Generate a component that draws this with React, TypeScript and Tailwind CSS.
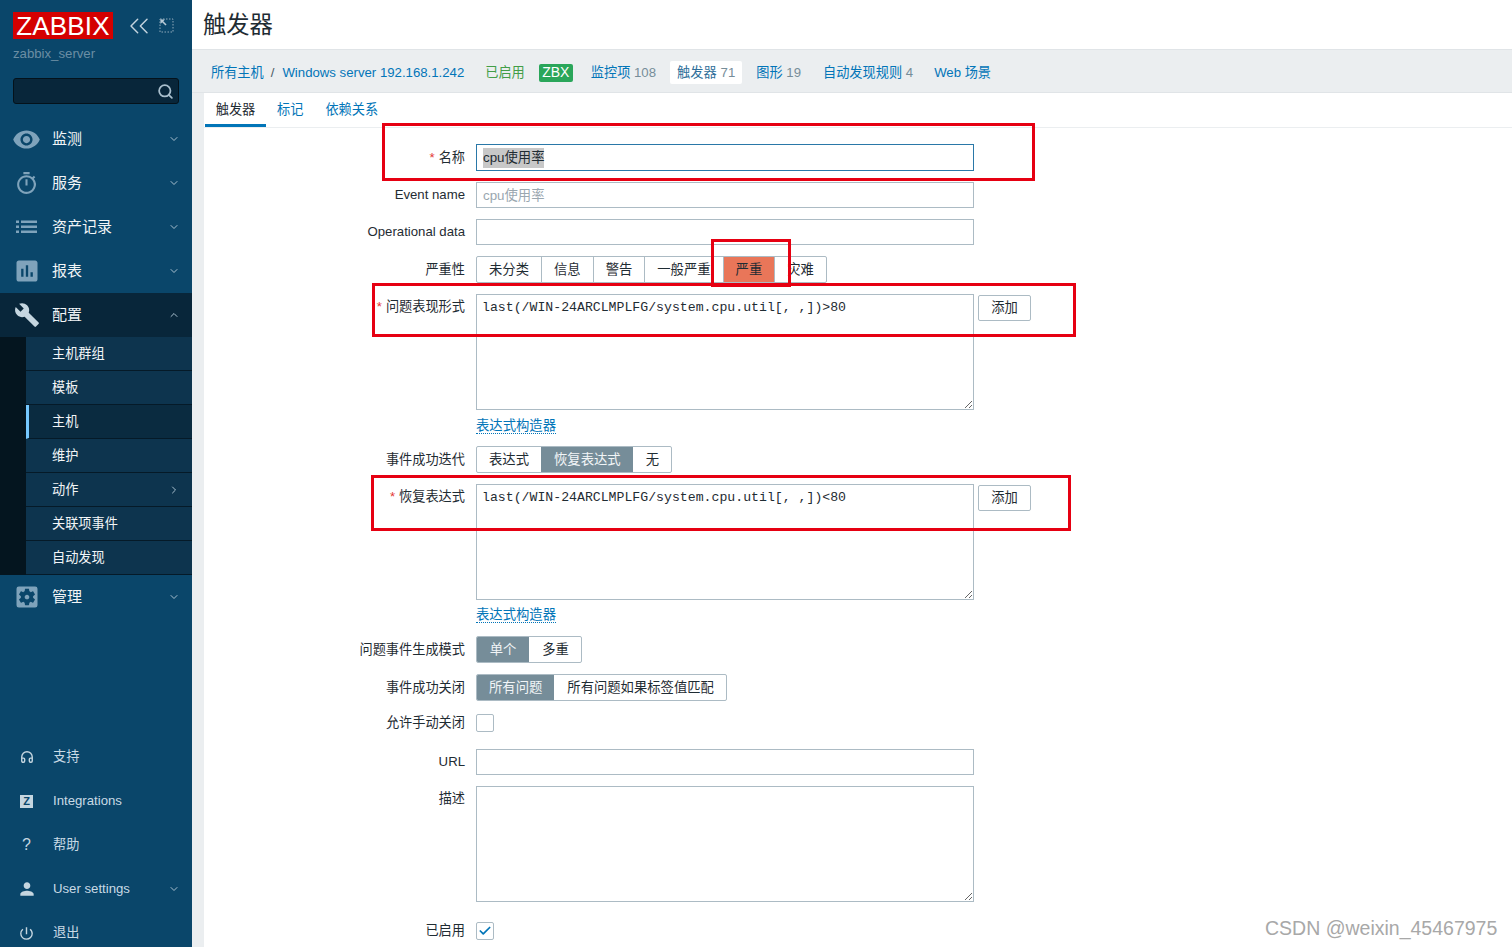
import React from "react";
import { ChevronDown, ChevronUp, ChevronRight, ChevronsLeft, Search, Check, Headphones } from "lucide-react";
import { MdVisibility, MdOutlineTimer, MdAssessment, MdBuild, MdSettingsApplications, MdPerson, MdPowerSettingsNew } from "react-icons/md";

function ListIcon() {
  return (
    <svg width="22" height="14" viewBox="0 0 22 14" fill="#7fa3bb">
      <rect x="0" y="0.5" width="3" height="2.5" />
      <rect x="0" y="5.5" width="3" height="2.5" />
      <rect x="0" y="10.5" width="3" height="2.5" />
      <rect x="5" y="0.5" width="16" height="2.5" />
      <rect x="5" y="5.5" width="16" height="2.5" />
      <rect x="5" y="10.5" width="16" height="2.5" />
    </svg>
  );
}

function KioskIcon() {
  return (
    <svg width="15" height="15" viewBox="0 0 15 15" fill="none" stroke="#8fa9ba">
      <rect x="1" y="1" width="13" height="13" strokeDasharray="1.5 1.5" />
      <path d="M2 2l5 5" strokeWidth="1.6" stroke="#b8cad6" />
      <path d="M1.5 6V1.5H6z" fill="#b8cad6" stroke="none" />
    </svg>
  );
}

function MainItem({ icon, label, open, active }: { icon: React.ReactNode; label: string; open?: boolean; active?: boolean }) {
  return (
    <div className={`flex h-[44px] items-center ${active ? "bg-[#08263a]" : ""}`}>
      <div className="flex w-[52px] justify-center pl-[1px]">{icon}</div>
      <span className="flex-1 text-[15px] text-[#f2f5f7]">{label}</span>
      <div className="flex w-[36px] justify-center pr-[1px] text-[#a9c0cf]">
        {open ? <ChevronUp size={12} strokeWidth={2} /> : <ChevronDown size={12} strokeWidth={2} />}
      </div>
    </div>
  );
}

function SubItem({ label, active, arrow }: { label: string; active?: boolean; arrow?: boolean }) {
  return (
    <div className={`flex h-[34px] items-center border-b border-[#051a28] pl-[26px] ${active ? "bg-[#0a2b40] border-l-[3px] border-l-[#75c8ff] !pl-[23px]" : ""}`}>
      <span className="flex-1 text-[13.2px] text-[#f2f5f7]">{label}</span>
      {arrow && (
        <div className="flex w-[36px] justify-center text-[#a9c0cf]">
          <ChevronRight size={12} strokeWidth={2} />
        </div>
      )}
    </div>
  );
}

function BottomItem({ icon, label, arrow }: { icon: React.ReactNode; label: string; arrow?: boolean }) {
  return (
    <div className="flex h-[44px] shrink-0 items-center">
      <div className="flex w-[53px] justify-center text-[#c5d6e0]">{icon}</div>
      <span className="flex-1 text-[13.2px] text-[#c9dae5]">{label}</span>
      {arrow && (
        <div className="flex w-[36px] justify-center pr-[1px] text-[#a9c0cf]">
          <ChevronDown size={12} strokeWidth={2} />
        </div>
      )}
    </div>
  );
}

function Sidebar() {
  return (
    <aside className="flex h-full w-[192px] shrink-0 flex-col overflow-hidden bg-[#0a466a]">
      <div className="flex h-[39px] shrink-0 items-center pl-[13px] pt-[12px]">
        <div className="flex h-[27px] w-[100px] items-center justify-center bg-[#d40000] text-[26px] leading-none tracking-[0.2px] text-white">ZABBIX</div>
        <div className="ml-[10px] text-[#c3d3de]">
          <ChevronsLeft size={32} strokeWidth={1.1} />
        </div>
        <div className="ml-[4px]">
          <KioskIcon />
        </div>
      </div>
      <div className="mt-[7px] shrink-0 pl-[13px] text-[13.2px] leading-[16px] text-[#6a8ea4]">zabbix_server</div>
      <div className="ml-[13px] mt-[16px] flex h-[26px] w-[166px] shrink-0 items-center justify-end rounded-[3px] border border-[#04121b] bg-[#08263a] pr-[4px] text-[#a9bfcd]">
        <Search size={17} strokeWidth={2.5} />
      </div>
      <nav className="mt-[13px] shrink-0">
        <MainItem icon={<MdVisibility size={29} color="#7fa3bb" />} label="监测" />
        <MainItem icon={<MdOutlineTimer size={25} color="#7fa3bb" />} label="服务" />
        <MainItem icon={<ListIcon />} label="资产记录" />
        <MainItem icon={<MdAssessment size={28} color="#7fa3bb" />} label="报表" />
        <MainItem icon={<MdBuild size={26} color="#c5d6e0" />} label="配置" open active />
        <div className="bg-[#04151f]">
          <div className="ml-[26px] bg-[#0d344e]">
            <SubItem label="主机群组" />
            <SubItem label="模板" />
            <SubItem label="主机" active />
            <SubItem label="维护" />
            <SubItem label="动作" arrow />
            <SubItem label="关联项事件" />
            <SubItem label="自动发现" />
          </div>
        </div>
        <MainItem icon={<MdSettingsApplications size={28} color="#7fa3bb" />} label="管理" />
      </nav>
      <div className="mt-[116px] flex shrink-0 flex-col">
        <BottomItem icon={<Headphones size={14} strokeWidth={2.4} />} label="支持" />
        <BottomItem
          icon={<div className="flex h-[13px] w-[13px] items-center justify-center bg-[#c5d6e0] text-[11px] font-bold leading-none text-[#0a466a]">Z</div>}
          label="Integrations"
        />
        <BottomItem icon={<span className="text-[16px] leading-none">?</span>} label="帮助" />
        <BottomItem icon={<MdPerson size={20} />} label="User settings" arrow />
        <BottomItem icon={<MdPowerSettingsNew size={17} />} label="退出" />
      </div>
    </aside>
  );
}

function Breadcrumbs() {
  return (
    <div className="flex h-[43px] shrink-0 items-center border-b border-[#e0e4e7] pl-[19px] pt-[3px] text-[13.2px] text-[#0275b8]">
      <span>所有主机</span>
      <span className="ml-[7px] text-[#4a5a64]">/</span>
      <span className="ml-[8px]">Windows server 192.168.1.242</span>
      <span className="ml-[21px] text-[#429e47]">已启用</span>
      <span className="ml-[14px] flex h-[18px] w-[34px] items-center justify-center rounded-[2px] bg-[#2aa65a] text-[14px] text-white">ZBX</span>
      <span className="ml-[18px]">
        监控项 <span className="text-[#768d99]">108</span>
      </span>
      <span className="ml-[14px] flex h-[23px] items-center rounded-[2px] bg-white px-[7px] text-[#2f6f9a]">
        触发器 <span className="ml-[4px] text-[#768d99]">71</span>
      </span>
      <span className="ml-[14px]">
        图形 <span className="text-[#768d99]">19</span>
      </span>
      <span className="ml-[22px]">
        自动发现规则 <span className="text-[#768d99]">4</span>
      </span>
      <span className="ml-[21px]">Web 场景</span>
    </div>
  );
}

function Tabs() {
  return (
    <div className="flex h-[35px] shrink-0 items-stretch border-b border-[#ebeef0] pl-px text-[13.2px] text-[#0275b8]">
      <div className="flex h-[34px] w-[61px] items-center justify-center border-b-[3px] border-[#0275b8] pt-[2px] text-[#1f2c33]">触发器</div>
      <div className="ml-[11px] flex h-[34px] items-center pb-[1px]">标记</div>
      <div className="ml-[22px] flex h-[34px] items-center pb-[1px]">依赖关系</div>
    </div>
  );
}

function Row({ label, req, top, children, className = "" }: { label: string; req?: boolean; top?: boolean; children: React.ReactNode; className?: string }) {
  return (
    <div className={`flex ${top ? "items-start" : "items-center"} ${className}`}>
      <label className={`flex w-[261px] shrink-0 justify-end pr-0 text-[13.2px] leading-[16px] text-[#1f2c33] ${top ? "pt-[5px]" : ""}`}>
        {req && <span className="mr-[4px] text-[#e33734]">*</span>}
        {label}
      </label>
      <div className="ml-[11px] flex items-start">{children}</div>
    </div>
  );
}

function Segments({ items, selected, danger, wide }: { items: string[]; selected: number; danger?: boolean; wide?: boolean }) {
  return (
    <div className="flex h-[27px] overflow-hidden rounded-[2px] border border-[#acbbc4] text-[13.33px] text-[#1f2c33]">
      {items.map((t, i) => (
        <div
          key={t}
          className={`flex items-center justify-center border-l px-[12px] first:border-l-0 ${wide ? "min-w-[52px]" : ""} ${danger ? "border-[#acbbc4]" : "border-transparent"} ${
            i === selected ? (danger ? "bg-[#e97659]" : "bg-[#768d99] text-[#f2f5f7]") : ""
          }`}
        >
          {t}
        </div>
      ))}
    </div>
  );
}

const inputBase = "h-[26px] w-[498px] border bg-white px-[6px] text-[13.33px] text-[#1f2c33] outline-none";
const inputCls = `${inputBase} border-[#acbbc4]`;
const monoCls =
  "block h-[116px] w-[498px] resize-y border border-[#acbbc4] bg-white pb-[4px] pl-[5px] pr-[6px] pt-[5px] [font-family:'Liberation_Mono',monospace] text-[13.2px] leading-[15px] text-[#1f2c33] outline-none";

function AddButton() {
  return <button className="ml-[4px] mt-px h-[26px] w-[53px] rounded-[2px] border border-[#acbbc4] bg-white text-[13.33px] text-[#1f2c33]">添加</button>;
}

function BuilderLink({ className }: { className: string }) {
  return (
    <div className={`pl-[272px] ${className}`}>
      <span className="block h-[17px] w-fit border-b border-dotted border-[#0275b8] text-[13.33px] leading-[17px] text-[#0275b8]">表达式构造器</span>
    </div>
  );
}

function Form() {
  return (
    <form className="flex flex-col gap-[11px] pt-[16px]">
      <Row label="名称" req>
        <div className={`${inputBase} !h-[27px] flex items-center border-[#2a78a8] pt-[1px]`}>
          <span className="bg-[#c8c8c8]">cpu使用率</span>
        </div>
      </Row>
      <Row label="Event name">
        <input className={`${inputCls} placeholder:text-[#9aa7b0]`} placeholder="cpu使用率" readOnly />
      </Row>
      <Row label="Operational data">
        <input className={inputCls} readOnly />
      </Row>
      <Row label="严重性">
        <Segments items={["未分类", "信息", "警告", "一般严重", "严重", "灾难"]} selected={4} danger />
      </Row>
      <Row label="问题表现形式" req top>
        <textarea className={monoCls} defaultValue="last(/WIN-24ARCLMPLFG/system.cpu.util[, ,])>80" readOnly />
        <AddButton />
      </Row>
      <BuilderLink className="-mt-[4px] mb-[1px]" />
      <Row label="事件成功迭代">
        <Segments items={["表达式", "恢复表达式", "无"]} selected={1} />
      </Row>
      <Row label="恢复表达式" req top>
        <textarea className={monoCls} defaultValue="last(/WIN-24ARCLMPLFG/system.cpu.util[, ,])<80" readOnly />
        <AddButton />
      </Row>
      <BuilderLink className="-mt-[5px] mb-[2px]" />
      <Row label="问题事件生成模式">
        <Segments items={["单个", "多重"]} selected={0} wide />
      </Row>
      <Row label="事件成功关闭">
        <Segments items={["所有问题", "所有问题如果标签值匹配"]} selected={0} />
      </Row>
      <Row label="允许手动关闭" className="mb-[6px] mt-[2px]">
        <div className="h-[18px] w-[18px] rounded-[2px] border border-[#acbbc4] bg-white" />
      </Row>
      <Row label="URL">
        <input className={inputCls} readOnly />
      </Row>
      <Row label="描述" top>
        <textarea className={monoCls} readOnly />
      </Row>
      <Row label="已启用" className="mt-[9px]">
        <div className="flex h-[18px] w-[18px] items-center justify-center rounded-[2px] border border-[#acbbc4] bg-white text-[#0275b8]">
          <Check size={14} strokeWidth={3} />
        </div>
      </Row>
    </form>
  );
}

export default function App() {
  return (
    <div className="relative flex h-[947px] w-[1512px] overflow-hidden bg-[#ebeef0] [font-family:'Liberation_Sans','Noto_Sans_CJK_SC',sans-serif]">
      <Sidebar />
      <main className="flex min-w-0 flex-1 flex-col">
        <header className="flex h-[50px] shrink-0 items-center border-b border-[#e0e4e7] bg-white pl-[11px] pt-[2px] text-[23.3px] text-[#1f2c33]">触发器</header>
        <Breadcrumbs />
        <div className="ml-[12px] flex-1 bg-white">
          <Tabs />
          <Form />
        </div>
      </main>
      <div className="pointer-events-none absolute left-[382px] top-[123px] h-[58px] w-[653px] border-[3px] border-[#e60012]" />
      <div className="pointer-events-none absolute left-[711px] top-[239px] h-[48px] w-[80px] border-[3px] border-[#e60012]" />
      <div className="pointer-events-none absolute left-[372px] top-[283px] h-[54px] w-[704px] border-[3px] border-[#e60012]" />
      <div className="pointer-events-none absolute left-[371px] top-[475px] h-[56px] w-[700px] border-[3px] border-[#e60012]" />
      <div className="pointer-events-none absolute left-[1265px] top-[916px] text-[19.5px] leading-[24px] text-[#a8a8a8]">CSDN @weixin_45467975</div>
    </div>
  );
}
